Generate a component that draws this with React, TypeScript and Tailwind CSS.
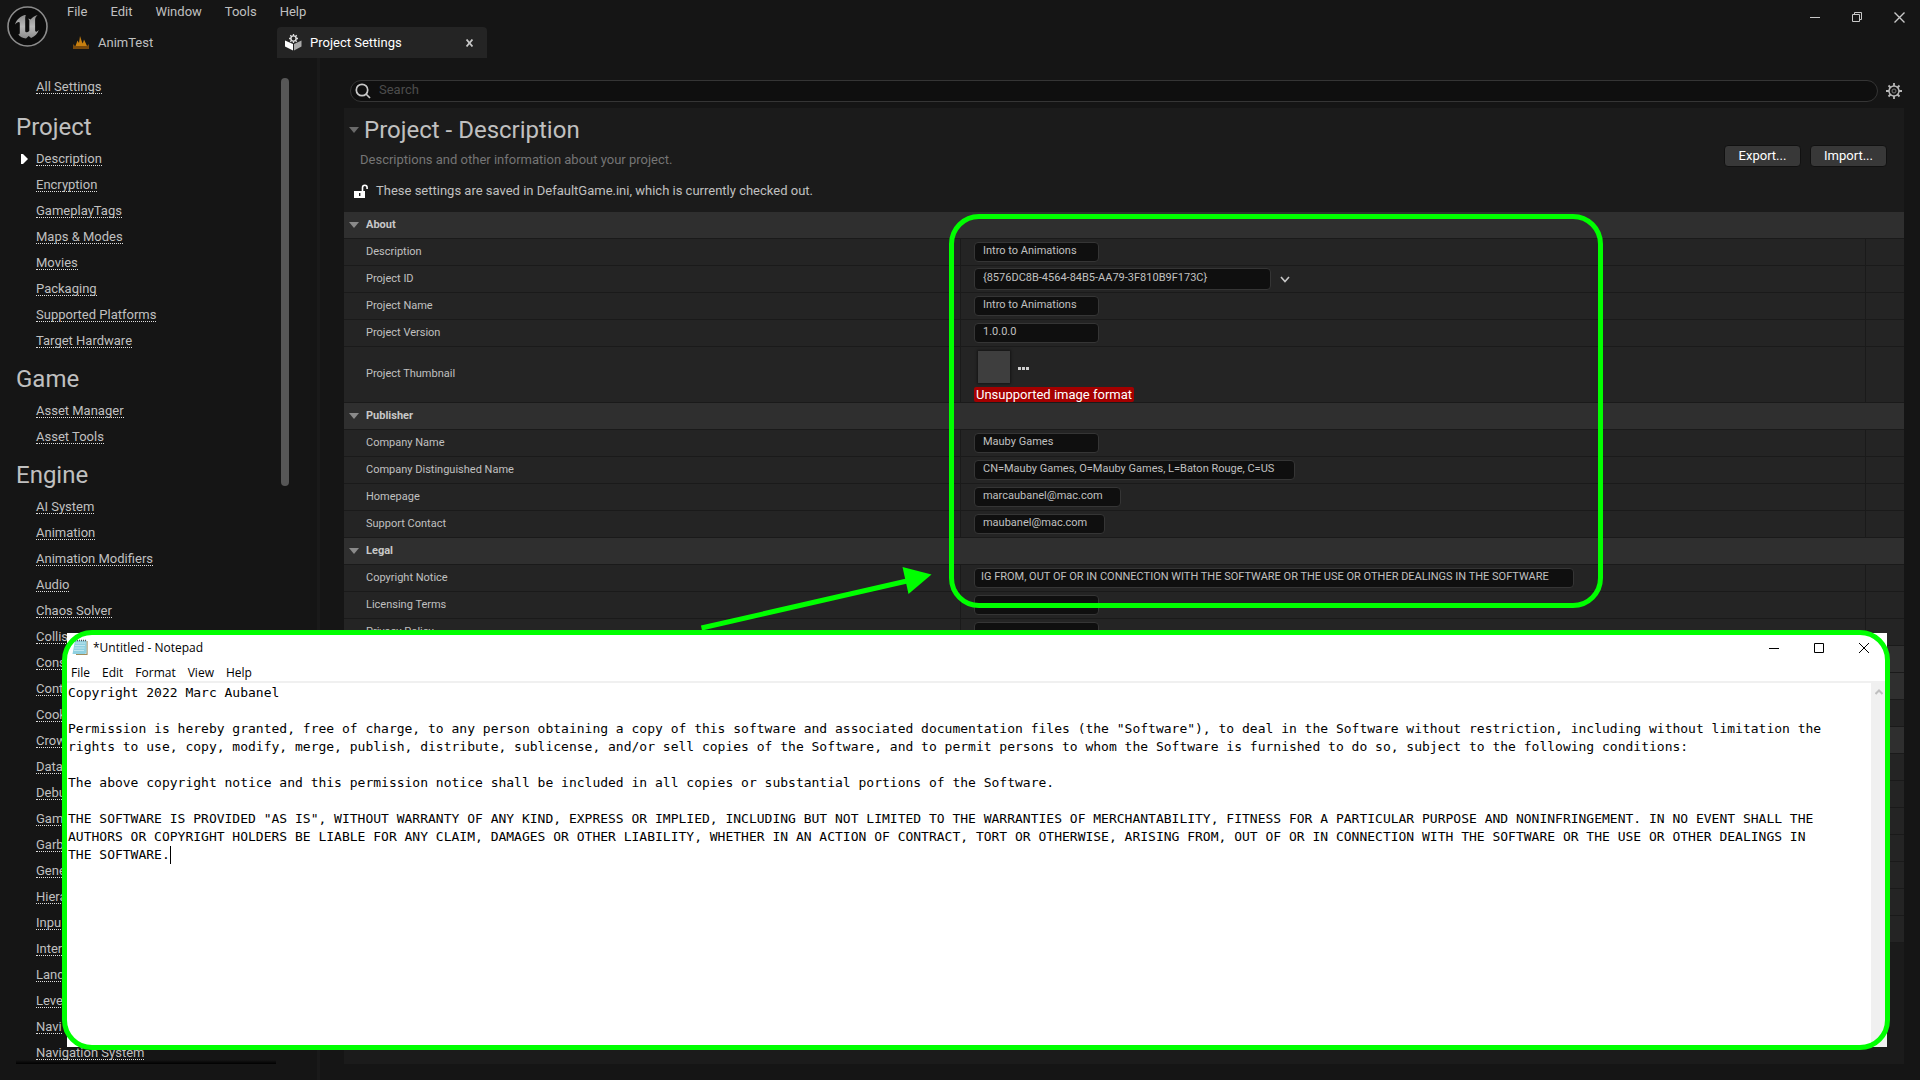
import React from "react";

const projectLinks = ["Description", "Encryption", "GameplayTags", "Maps & Modes", "Movies", "Packaging", "Supported Platforms", "Target Hardware"];
const gameLinks = ["Asset Manager", "Asset Tools"];
const engineLinks = ["AI System", "Animation", "Animation Modifiers", "Audio", "Chaos Solver", "Collis", "Cons", "Cont", "Cook", "Crow", "Data", "Debu", "Gam", "Garb", "Gene", "Hiera", "Inpu", "Inter", "Land", "Leve", "Navi", "Navigation System"];

function NavSection({ title, links, active }: { title: string; links: string[]; active?: string }) {
  return (
    <section className="pb-[7px]">
      <h2 className="h-[37px] pl-4 text-2xl leading-9 text-[#c0c0c0]">{title}</h2>
      <ul>
        {links.map((l) => (
          <li key={l} className="flex h-[26px] items-center">
            <span className="flex w-9 justify-end pr-2">
              {l === active && (
                <svg width="7" height="10" viewBox="0 0 7 10" fill="#fff"><path d="M0 0h2l5 5-5 5H0z" /></svg>
              )}
            </span>
            <NavLink text={l} />
          </li>
        ))}
      </ul>
    </section>
  );
}

function NavLink({ text }: { text: string }) {
  return (
    <a href="#" className="flex h-[14px] items-center whitespace-nowrap border-b border-dotted border-[#e0e0e0] text-[13px] text-[#c0c0c0]">
      {text}
    </a>
  );
}

function Triangle({ color }: { color: string }) {
  return (
    <svg width="10" height="6" viewBox="0 0 10 6" fill={color}><path d="M0 0h10L5 6z" /></svg>
  );
}

function Header({ title }: { title?: string }) {
  return (
    <div className="flex h-[27px] items-center border-b border-[#1a1a1a] bg-[#2f2f2f] pl-[5px]">
      {title && (
        <button className="flex items-center gap-[7px] text-[11px] font-bold text-[#c8c8c8]">
          <Triangle color="#8a8a8a" />
          {title}
        </button>
      )}
    </div>
  );
}

function Row({ label, children, tall, id }: { label?: string; children?: React.ReactNode; tall?: boolean; id?: string }) {
  return (
    <div className={`grid grid-cols-[39.55%_1fr_38px] border-b border-[#1a1a1a] bg-[#242424] ${tall ? "h-14" : "h-[27px]"}`}>
      <div className="flex items-center border-r border-[#1a1a1a] pl-[22px] text-[11px] text-[#c0c0c0]">
        {label && <label htmlFor={id}>{label}</label>}
      </div>
      <div className="flex min-w-0 items-center border-r border-[#1a1a1a] pl-[13px]">{children}</div>
      <div />
    </div>
  );
}

function Field({ id, value, size, align }: { id: string; value: string; size: string; align?: string }) {
  return (
    <input
      id={id}
      defaultValue={value}
      className={`rounded-[4px] border border-[#353535] bg-[#0f0f0f] pb-[3px] text-[11px] text-[#c0c0c0] outline-none ${size} ${align ?? "px-2"}`}
    />
  );
}

const notice =
  'Copyright 2022 Marc Aubanel\n\nPermission is hereby granted, free of charge, to any person obtaining a copy of this software and associated documentation files (the "Software"), to deal in the Software without restriction, including without limitation the\nrights to use, copy, modify, merge, publish, distribute, sublicense, and/or sell copies of the Software, and to permit persons to whom the Software is furnished to do so, subject to the following conditions:\n\nThe above copyright notice and this permission notice shall be included in all copies or substantial portions of the Software.\n\nTHE SOFTWARE IS PROVIDED "AS IS", WITHOUT WARRANTY OF ANY KIND, EXPRESS OR IMPLIED, INCLUDING BUT NOT LIMITED TO THE WARRANTIES OF MERCHANTABILITY, FITNESS FOR A PARTICULAR PURPOSE AND NONINFRINGEMENT. IN NO EVENT SHALL THE\nAUTHORS OR COPYRIGHT HOLDERS BE LIABLE FOR ANY CLAIM, DAMAGES OR OTHER LIABILITY, WHETHER IN AN ACTION OF CONTRACT, TORT OR OTHERWISE, ARISING FROM, OUT OF OR IN CONNECTION WITH THE SOFTWARE OR THE USE OR OTHER DEALINGS IN\nTHE SOFTWARE.';

function Notepad() {
  return (
    <div className="absolute top-[633px] right-[33px] bottom-[33px] left-[67px] flex flex-col bg-white text-black">
      <div className="flex h-[31px] items-center justify-between pr-[18px] pb-[2px] pl-[5px] text-xs">
        <div className="flex items-center gap-[5px] font-[Open_Sans]">
          <svg width="16" height="17" viewBox="0 0 16 17">
            <path d="M4 15.500h11V2" fill="none" stroke="#a08c5a" strokeWidth="1.200" />
            <path d="M3 1.500h11.500V14L13 15H0.500z" fill="#8fd0e0" />
            <path d="M3.500 4h10M3 6.500h10M2.500 9h10M2 11.500h10" stroke="#bfe6ef" strokeWidth="1" />
            <path d="M3 1.500h11.500" stroke="#555" strokeWidth="1.500" strokeDasharray="1 1" />
          </svg>
          <span>*Untitled - Notepad</span>
        </div>
        <div className="flex gap-[35px]">
          <button aria-label="Minimize"><svg width="10" height="10" viewBox="0 0 10 10"><path d="M0 5.500h10" stroke="#000" /></svg></button>
          <button aria-label="Maximize"><svg width="10" height="10" viewBox="0 0 10 10"><path d="M.5.500h9v9h-9z" fill="none" stroke="#000" /></svg></button>
          <button aria-label="Close"><svg width="10" height="10" viewBox="0 0 10 10"><path d="M0 0l10 10M10 0L0 10" stroke="#000" /></svg></button>
        </div>
      </div>
      <div className="flex h-[17px] items-center gap-3 pl-1 font-[Open_Sans] text-xs">
        {["File", "Edit", "Format", "View", "Help"].map((m) => (<button key={m}>{m}</button>))}
      </div>
      <div className="flex min-h-0 flex-1 border-t-2 border-[#f0f0f0]">
        <div className="min-w-0 flex-1 overflow-hidden pt-px pl-px font-[DejaVu_Sans_Mono,monospace] text-[13px] leading-[18px] whitespace-pre">
          {notice}
          <span className="inline-block h-[18px] w-px bg-black align-top" />
        </div>
        <div className="flex w-4 justify-center bg-[#f0f0f0] pt-[6px]">
          <svg width="8" height="6" viewBox="0 0 8 6"><path d="M.5 5L4 1.500 7.500 5" fill="none" stroke="#bfbfbf" strokeWidth="2" /></svg>
        </div>
      </div>
    </div>
  );
}

export default function App() {
  return (
    <div className="relative flex h-screen flex-col overflow-hidden bg-[#151515] font-[Roboto,sans-serif] text-[13px] text-[#c0c0c0]">
      <header className="flex h-[58px] shrink-0">
        <svg className="mt-[6px] ml-[7px] shrink-0" width="41" height="41" viewBox="0 0 41 41">
          <defs>
            <linearGradient id="metal" x1="0" y1="0" x2="0" y2="1">
              <stop offset="0" stopColor="#8a8a8a" /><stop offset="0.500" stopColor="#b8b8b8" /><stop offset="1" stopColor="#8a8a8a" />
            </linearGradient>
          </defs>
          <circle cx="20.500" cy="20.500" r="19.500" fill="#0c0c0c" stroke="#8c8c8c" strokeWidth="1.600" />
          <path fill="url(#metal)" d="M19 8.500C13.500 10 9.500 13.500 8 18.500c2-2 3.300-2.700 4-2.400.6.200.8.800.8 1.700v8.700c0 1.400-.5 2-1.600 1.800 1.700 2.600 4.500 4 7.800 4.200l2.700-2.600 2.400 2c4-1.700 6.500-4.400 7.700-8-1.300 1.300-2.300 1.900-3 1.700-.5-.1-.7-.6-.7-1.400V14c0-2 .8-3.500 2.500-5-3 .7-5.200 2.200-7 4.400-.8-.7-1.600-.9-2.600-.7.900.6 1.300 1.300 1.300 2.300v9.800c-.8 1-1.700 1.500-2.600 1.500-1 0-1.500-.5-1.500-1.600V13c0-2 .3-3.300.8-4.500z" />
        </svg>
        <div className="flex min-w-0 flex-1 flex-col">
          <nav className="flex h-[27px] items-center gap-[23px] pb-[3px] pl-[19px]">
            {["File", "Edit", "Window", "Tools", "Help"].map((m) => (<button key={m}>{m}</button>))}
          </nav>
          <div className="flex h-[31px]">
            <button className="flex w-[229px] items-center gap-[9px] pl-[25px]">
              <svg width="16" height="13" viewBox="0 0 16 13">
                <path d="M0 8l2 2h12l2-2v5H0z" fill="#7a4a0c" />
                <path d="M2.500 10l2-5.500L6 7l1-7 2 6 .8 1.500L11 3.500l3 6.500z" fill="#c9800f" />
              </svg>
              AnimTest
            </button>
            <div className="flex w-[210px] items-center rounded-t-[4px] bg-[#242424] px-2 text-white">
              <svg className="mr-2" width="17" height="17" viewBox="0 0 17 17">
                <path d="M0 6.500l8 3.500v6.500L0 12.500z" fill="#fff" />
                <path d="M9 10l7.500-3.500v6L9 16.500z" fill="#aaa" />
                <circle cx="8.500" cy="4.500" r="2.600" fill="#242424" stroke="#ddd" strokeWidth="1.400" />
                <path d="M8.500 0v2M8.500 7v2M4 4.500h2M11 4.500h2M5.300 1.300l1.300 1.300M11.700 1.300l-1.300 1.300M5.300 7.700l1.300-1.300M11.700 7.700l-1.300-1.300" stroke="#ddd" strokeWidth="1.300" />
              </svg>
              <span className="flex-1">Project Settings</span>
              <button aria-label="Close tab" className="mr-[6px]">
                <svg width="7" height="8" viewBox="0 0 7 8"><path d="M.5.500l6 7M6.500.500l-6 7" stroke="#c8c8c8" strokeWidth="1.800" /></svg>
              </button>
            </div>
          </div>
        </div>
        <div className="flex items-start gap-8 pt-3 pr-[15px]">
          <button aria-label="Minimize"><svg width="10" height="11" viewBox="0 0 10 11"><path d="M0 5.500h10" stroke="#c8c8c8" /></svg></button>
          <button aria-label="Restore"><svg width="10" height="10" viewBox="0 0 10 10" fill="none" stroke="#c8c8c8"><path d="M.5 2.500h7v7h-7zM2.500 2.500v-2h7v7h-2" /></svg></button>
          <button aria-label="Close"><svg width="11" height="11" viewBox="0 0 11 11"><path d="M.5.500l10 10M10.500.500l-10 10" stroke="#c8c8c8" strokeWidth="1.400" /></svg></button>
        </div>
      </header>

      <div className="flex min-h-0 flex-1 pb-4">
        <aside className="flex w-[317px] shrink-0 overflow-hidden">
          <div className="flex w-[281px] flex-col pt-[22px]">
            <div className="flex h-[26px] items-center pl-9"><NavLink text="All Settings" /></div>
            <div className="pt-[15px]">
              <NavSection title="Project" links={projectLinks} active="Description" />
              <NavSection title="Game" links={gameLinks} />
              <NavSection title="Engine" links={engineLinks} />
            </div>
          </div>
          <div className="mt-5 h-[408px] w-2 rounded-full bg-[#575757]" />
        </aside>
        <div className="-mb-4 w-[3px] shrink-0 bg-[#1a1a1a]" />
        <main className="flex min-w-0 flex-1 flex-col pt-[22px] pr-4 pl-6">
          <div className="mb-[6px] flex items-center gap-2 pr-[2px] pl-[6px]">
            <label className="flex h-[22px] flex-1 items-center gap-2 rounded-full border border-[#353535] bg-[#0f0f0f] pl-1">
              <svg width="16" height="16" viewBox="0 0 16 16" fill="none" stroke="#c8c8c8" strokeWidth="1.700"><circle cx="7" cy="7" r="5.700" /><path d="M11 11l4 4" /></svg>
              <input placeholder="Search" aria-label="Search" className="h-4 flex-1 bg-transparent pb-[2px] outline-none placeholder:text-[#4c4c4c]" />
            </label>
            <button aria-label="Settings">
              <svg width="16" height="16" viewBox="0 0 16 16" fill="none" stroke="#b8b8b8">
                <circle cx="8" cy="8" r="5" strokeWidth="1.500" /><circle cx="8" cy="8" r="2" stroke="#777" />
                <path d="M8 0v3M8 13v3M0 8h3M13 8h3M2.500 2.500l2 2M11.500 11.500l2 2M13.500 2.500l-2 2M4.500 11.500l-2 2" strokeWidth="1.800" />
              </svg>
            </button>
          </div>
          <div className="flex min-h-0 flex-1 flex-col bg-[#1b1b1b]">
            <div className="flex h-[104px] shrink-0 justify-between pr-[17px]">
              <div>
                <h1 className="flex h-[42px] items-center gap-[5px] pt-px pl-[5px] text-2xl"><Triangle color="#6a6a6a" />Project - Description</h1>
                <p className="flex h-5 items-center pl-4 text-[#757575]">Descriptions and other information about your project.</p>
                <p className="flex h-[42px] items-center gap-2 pl-[10px]">
                  <svg width="14" height="15" viewBox="0 0 14 15">
                    <path d="M0 7h11v7H0z" fill="#fff" /><path d="M8.500 7V3.500a2.300 2.300 0 0 1 4.600 0V5" fill="none" stroke="#fff" strokeWidth="1.600" /><path d="M5 9h1.400v3H5z" fill="#1b1b1b" />
                  </svg>
                  These settings are saved in DefaultGame.ini, which is currently checked out.
                </p>
              </div>
              <div className="flex items-start gap-[9px] pt-[37px] text-white">
                <button className="h-[22px] w-[77px] rounded-[4px] border border-[#111] bg-[#383838]">Export...</button>
                <button className="h-[22px] w-[77px] rounded-[4px] border border-[#111] bg-[#383838]">Import...</button>
              </div>
            </div>
            <Header title="About" />
            <Row label="Description" id="desc"><Field id="desc" value="Intro to Animations" size="h-5 w-[125px]" /></Row>
            <Row label="Project ID" id="pid">
              <Field id="pid" value="{8576DC8B-4564-84B5-AA79-3F810B9F173C}" size="h-[22px] w-[297px]" />
              <button aria-label="Expand" className="ml-[9px]"><svg width="10" height="7" viewBox="0 0 10 7"><path d="M1 1l4 4.500L9 1" fill="none" stroke="#c8c8c8" strokeWidth="1.600" /></svg></button>
            </Row>
            <Row label="Project Name" id="pname"><Field id="pname" value="Intro to Animations" size="h-5 w-[125px]" /></Row>
            <Row label="Project Version" id="pver"><Field id="pver" value="1.0.0.0" size="h-5 w-[125px]" /></Row>
            <Row label="Project Thumbnail" tall>
              <div className="flex flex-col items-start gap-1 pt-1">
                <div className="flex items-center gap-2 pl-1">
                  <div className="size-8 bg-[#3e3e3e] shadow-[0_0_2px_1px_#151515]" />
                  <button aria-label="Browse" className="pt-[2px]">
                    <svg width="11" height="3" viewBox="0 0 11 3" fill="#d0d0d0"><path d="M0 0h3v3H0zM4 0h3v3H4zM8 0h3v3H8z" /></svg>
                  </button>
                </div>
                <span className="rounded-[2px] bg-[#a40000] px-[2px] leading-[15px] text-white">Unsupported image format</span>
              </div>
            </Row>
            <Header title="Publisher" />
            <Row label="Company Name" id="cname"><Field id="cname" value="Mauby Games" size="h-5 w-[125px]" /></Row>
            <Row label="Company Distinguished Name" id="cdn"><Field id="cdn" value="CN=Mauby Games, O=Mauby Games, L=Baton Rouge, C=US" size="h-5 w-[321px]" /></Row>
            <Row label="Homepage" id="home"><Field id="home" value="marcaubanel@mac.com" size="h-5 w-[147px]" /></Row>
            <Row label="Support Contact" id="support"><Field id="support" value="maubanel@mac.com" size="h-5 w-[131px]" /></Row>
            <Header title="Legal" />
            <Row label="Copyright Notice" id="copy">
              <Field id="copy" value="IG FROM, OUT OF OR IN CONNECTION WITH THE SOFTWARE OR THE USE OR OTHER DEALINGS IN THE SOFTWARE" size="h-5 w-[600px]" align="pl-[6px] pr-[14px]" />
            </Row>
            <Row label="Licensing Terms" id="lic"><Field id="lic" value="" size="h-5 w-[125px]" /></Row>
            <Row label="Privacy Policy" id="priv"><Field id="priv" value="" size="h-5 w-[125px]" /></Row>
            <Header />
            <Header />
            <Row />
            <Header />
            {Array.from({ length: 7 }, (_, i) => (<Row key={i} />))}
          </div>
        </main>
      </div>

      <div className="absolute bottom-4 left-4 h-1 w-[260px] bg-linear-to-b from-transparent to-black" />
      <Notepad />
      <div className="pointer-events-none absolute top-[630px] right-[30px] bottom-[30px] left-[62px] rounded-[30px] border-[5px] border-[#00ff00]" />
      <div className="pointer-events-none absolute top-[214px] left-[949px] h-[394px] w-[654px] rounded-[30px] border-[5px] border-[#00ff00]" />
      <svg className="pointer-events-none absolute top-[560px] left-[695px]" width="245" height="75" viewBox="695 560 245 75">
        <path d="M701.500 628L907 581" stroke="#00ff00" strokeWidth="5" />
        <path d="M902.500 567l29 7.500-23 19.500z" fill="#00ff00" />
      </svg>
    </div>
  );
}
